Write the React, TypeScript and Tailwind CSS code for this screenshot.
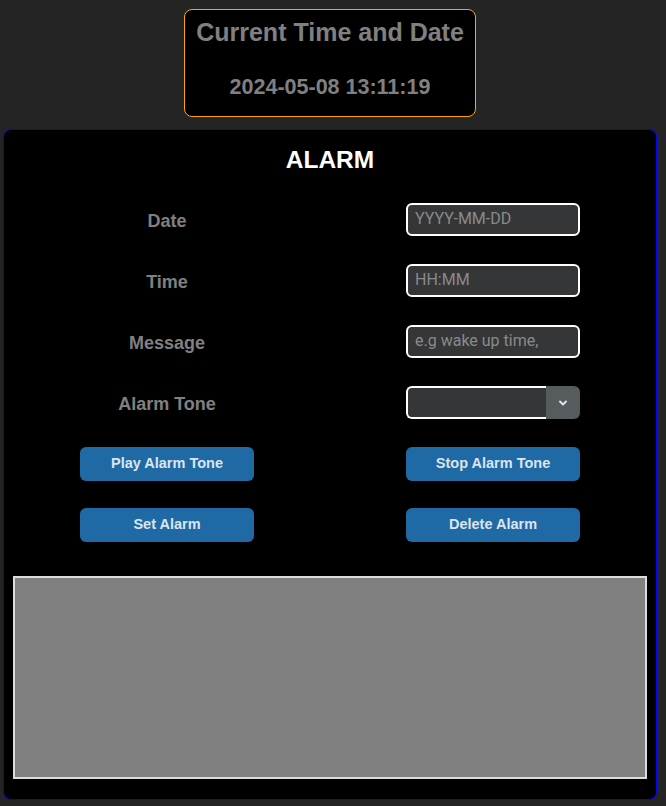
import { ChevronDown } from 'lucide-react'

const labelCls = "flex h-[33px] items-center justify-center pt-[4px] text-[18px] font-bold text-[#808080]"
const fieldCls =
  "h-[33px] w-[174px] rounded-[6px] border-2 border-white bg-[#343638] px-[7px] pb-[2px] text-[16px] text-[#dce4ee] outline-none placeholder:text-[#8a8a8a] font-[family-name:Roboto,sans-serif]"
const btnCls =
  "h-[34px] w-[174px] rounded-[6px] bg-[#1f6aa5] pt-[1px] text-[14.5px] font-bold text-[#dce4ee]"

function Row({ label, children }: { label: string; children: React.ReactNode }) {
  return (
    <>
      <div className={labelCls}>{label}</div>
      <div className="flex h-[33px] items-center justify-center">{children}</div>
    </>
  )
}

export default function App() {
  return (
    <div className="min-h-[806px] w-[666px] bg-[#242424] pt-[9px] pb-[6px] font-[family-name:'Liberation_Sans',Arial,sans-serif]">
      <div className="ml-[184px] flex h-[108px] w-[292px] flex-col items-center rounded-lg border border-[#ffa500] bg-black pt-[8px]">
        <div className="text-[25px] leading-[28px] font-bold text-[#808080]">Current Time and Date</div>
        <div className="mt-[29px] text-[21.5px] leading-[24px] font-bold text-[#808080]">2024-05-08 13:11:19</div>
      </div>

      <div className="mt-[12px] ml-[3px] flex h-[671px] w-[654px] flex-col rounded-lg border border-[#0000ff] bg-black">
        <div className="pt-[16px] text-center text-[24.5px] leading-[28px] font-bold text-white">ALARM</div>

        <div className="mt-[29px] grid grid-cols-2 gap-y-[28px]">
          <Row label="Date">
            <input className={fieldCls} placeholder="YYYY-MM-DD" />
          </Row>
          <Row label="Time">
            <input className={fieldCls} placeholder="HH:MM" />
          </Row>
          <Row label="Message">
            <input className={fieldCls} placeholder="e.g wake up time," />
          </Row>
          <Row label="Alarm Tone">
            <div className="relative flex h-[33px] w-[174px]">
              <div className="h-full flex-1 rounded-l-[6px] border-2 border-r-0 border-white bg-[#343638]" />
              <div className="flex h-full w-[34px] items-center justify-center rounded-r-[6px] bg-[#565b5e]">
                <ChevronDown size={12} strokeWidth={4} className="text-[#dce4ee]" />
              </div>
            </div>
          </Row>
          <div className="flex h-[33px] items-center justify-center">
            <button className={btnCls}>Play Alarm Tone</button>
          </div>
          <div className="flex h-[33px] items-center justify-center">
            <button className={btnCls}>Stop Alarm Tone</button>
          </div>
          <div className="flex h-[33px] items-center justify-center">
            <button className={btnCls}>Set Alarm</button>
          </div>
          <div className="flex h-[33px] items-center justify-center">
            <button className={btnCls}>Delete Alarm</button>
          </div>
        </div>

        <div className="mx-[9px] mt-[35px] h-[203px] border-2 border-[#dcdcdc] bg-[#808080]" />
      </div>
    </div>
  )
}
